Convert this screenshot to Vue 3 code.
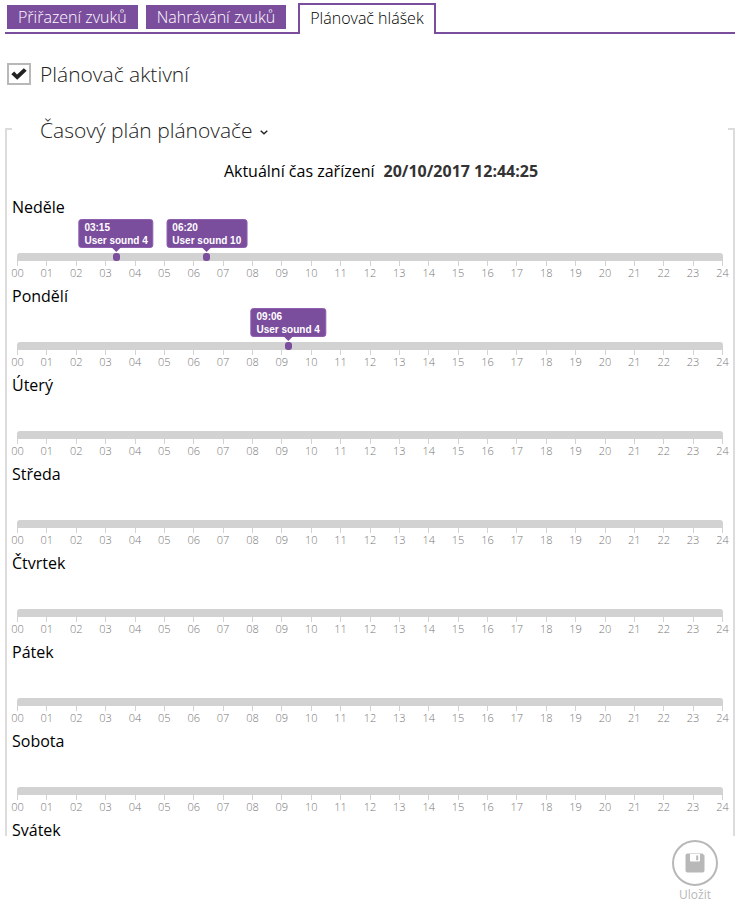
<script setup>
import { ref } from 'vue'

const tabs = ['Přiřazení zvuků', 'Nahrávání zvuků', 'Plánovač hlášek']
const activeTab = ref(2)
const enabled = ref(true)
const hours = Array.from({ length: 25 }, (_, i) => String(i).padStart(2, '0'))
// A day without an events list shows its name only.
const days = [
  {
    name: 'Neděle',
    events: [
      { time: '03:15', sound: 'User sound 4' },
      { time: '06:20', sound: 'User sound 10' },
    ],
  },
  { name: 'Pondělí', events: [{ time: '09:06', sound: 'User sound 4' }] },
  { name: 'Úterý', events: [] },
  { name: 'Středa', events: [] },
  { name: 'Čtvrtek', events: [] },
  { name: 'Pátek', events: [] },
  { name: 'Sobota', events: [] },
  { name: 'Svátek' },
]

function position(time) {
  const [h, m] = time.split(':').map(Number)
  return `${((h * 60 + m) / 1440) * 100}%`
}
</script>

<template>
  <div class="page">
    <main class="content">
      <nav class="tabs">
        <button
          v-for="(tab, i) in tabs"
          :key="tab"
          type="button"
          class="tab"
          :class="{ active: i === activeTab }"
          @click="activeTab = i"
        >{{ tab }}</button>
      </nav>

      <label class="toggle">
        <span class="box">
          <input v-model="enabled" type="checkbox" class="check">
          <svg v-if="enabled" class="tick" viewBox="0 0 16 12" aria-hidden="true">
            <path d="M0.3 6.2 3.2 3.6 6 6.4 12.8 0.2 15.7 2.8 6.2 11.8z" />
          </svg>
        </span>
        Plánovač aktivní
      </label>

      <fieldset class="plan">
        <legend class="legend">
          Časový plán plánovače
          <svg class="chevron" viewBox="0 0 8 5" aria-hidden="true"><path d="M0.7 0.8 4 3.8 7.3 0.8" /></svg>
        </legend>
        <p class="clock">
          <span>Aktuální čas zařízení</span>
          <strong>20/10/2017 12:44:25</strong>
        </p>
        <section v-for="day in days" :key="day.name" class="day">
          <h3 class="name">{{ day.name }}</h3>
          <div v-if="day.events" class="scale">
            <div class="track">
              <span
                v-for="event in day.events"
                :key="event.time"
                class="marker"
                :style="{ left: position(event.time) }"
              >
                <span class="bubble">{{ event.time }}<br>{{ event.sound }}</span>
              </span>
            </div>
            <div class="hours">
              <span v-for="hour in hours" :key="hour" class="hour">{{ hour }}</span>
            </div>
          </div>
        </section>
      </fieldset>
    </main>

    <footer class="footer">
      <button type="button" class="save">
        <span class="ring">
          <svg class="disk" viewBox="0 0 20 20" aria-hidden="true">
            <path fill-rule="evenodd" d="M2.5 0.5H17.5L19.5 2.5V17.5Q19.5 19.5 17.5 19.5H2.5Q0.5 19.5 0.5 17.5V2.5Q0.5 0.5 2.5 0.5zM5 1V7.6Q5 8.6 6 8.6H14Q15 8.6 15 7.6V1zM11.2 2.6H13.2V7.2H11.2z" />
          </svg>
        </span>
        Uložit
      </button>
    </footer>
  </div>
</template>

<style>
body {
  margin: 0;
  background: #fff;
}
</style>

<style scoped>
.page {
  display: flex;
  flex-direction: column;
  height: 100vh;
  font-family: "Open Sans", "Noto Sans", sans-serif;
  color: #000;
}

.content {
  flex: 1;
  min-height: 0;
  padding: 3px 11px 0 5px;
  overflow-y: auto;
  scrollbar-width: none;
}

.tabs {
  display: flex;
  align-items: flex-start;
  height: 29px;
  padding-left: 2px;
  border-bottom: 2px solid #7b4d9d;
}

.tab {
  height: 24px;
  margin: 2px 8px 0 0;
  padding: 0 11px;
  border: 0;
  background: #7b4d9d;
  color: #fff;
  font: 300 16px/24px "Open Sans", sans-serif;
  white-space: nowrap;
}

.tab.active {
  height: 31px;
  margin: 0 0 0 4px;
  padding: 0 10px 3px;
  border: 2px solid #7b4d9d;
  border-bottom: 0;
  background: #fff;
  color: #000;
}

.toggle {
  display: flex;
  align-items: center;
  gap: 9px;
  height: 30px;
  margin-top: 25px;
  padding-left: 2px;
  font-size: 21px;
  font-weight: 300;
  line-height: 30px;
  color: #222;
}

.box {
  display: grid;
  place-items: center;
}

.check,
.tick {
  grid-area: 1 / 1;
}

.check {
  appearance: none;
  box-sizing: border-box;
  width: 24px;
  height: 22px;
  margin: 0;
  border: 2px solid #b8b8b8;
  background: #fff;
}

.tick {
  width: 16px;
  height: 12px;
  fill: #222;
  pointer-events: none;
}

.plan {
  min-width: 0;
  margin: 23px 0 0;
  padding: 0 5px;
  border: 2px solid #dcdcdc;
}

.legend {
  box-sizing: border-box;
  width: 100%;
  padding: 2px 0 0 28px;
  font-size: 21px;
  font-weight: 300;
  line-height: 32px;
  color: #222;
}

.chevron {
  width: 8px;
  height: 5px;
  margin: 0 0 3px 2px;
  fill: none;
  stroke: #222;
  stroke-width: 1.4;
}

.clock {
  display: flex;
  justify-content: center;
  gap: 9px;
  margin: 0 0 14px;
  padding: 14px 0 0 22px;
  font-size: 16px;
  line-height: 22px;
}

.clock strong {
  color: #333;
}

.day {
  height: 89px;
}

.name {
  margin: 0;
  font-size: 16px;
  font-weight: 400;
  line-height: 22px;
}

.scale {
  padding: 35px 5px 0;
}

.track {
  position: relative;
  height: 8px;
  border-radius: 3px 3px 0 0;
  background: #d2d2d2;
}

.marker {
  position: absolute;
  top: 0;
  width: 7px;
  height: 8px;
  border-radius: 3px;
  background: #7b4d9d;
}

.bubble {
  position: absolute;
  bottom: 13px;
  left: 50%;
  padding: 1px 5px 0;
  border: 1px solid #8d5fad;
  border-radius: 3px;
  background: #7b4d9d;
  color: #fff;
  font: bold 10px/13px "Liberation Sans", Arial, sans-serif;
  white-space: nowrap;
  transform: translateX(-50%);
}

.bubble::after {
  content: "";
  position: absolute;
  top: 100%;
  left: 50%;
  border: 5px solid transparent;
  border-top-color: #7b4d9d;
  border-bottom: 0;
  transform: translateX(-50%);
}

.hours {
  display: flex;
  justify-content: space-between;
}

.hour {
  display: flex;
  flex-direction: column;
  align-items: center;
  width: 1px;
  font-size: 11px;
  font-weight: 300;
  line-height: 14px;
  color: #777;
}

.hour::before {
  content: "";
  width: 1px;
  height: 5px;
  background: #d2d2d2;
}

.footer {
  display: flex;
  justify-content: flex-end;
  box-sizing: border-box;
  height: 72px;
  padding: 4px 28px 0;
}

.save {
  display: flex;
  flex-direction: column;
  align-items: center;
  padding: 0;
  border: 0;
  background: none;
  color: #b8b8b8;
  font: 400 12px/18px "Open Sans", sans-serif;
}

.ring {
  display: grid;
  place-items: center;
  box-sizing: border-box;
  width: 46px;
  height: 46px;
  border: 2px solid #b8b8b8;
  border-radius: 50%;
}

.disk {
  width: 20px;
  height: 20px;
  fill: #b8b8b8;
}
</style>
